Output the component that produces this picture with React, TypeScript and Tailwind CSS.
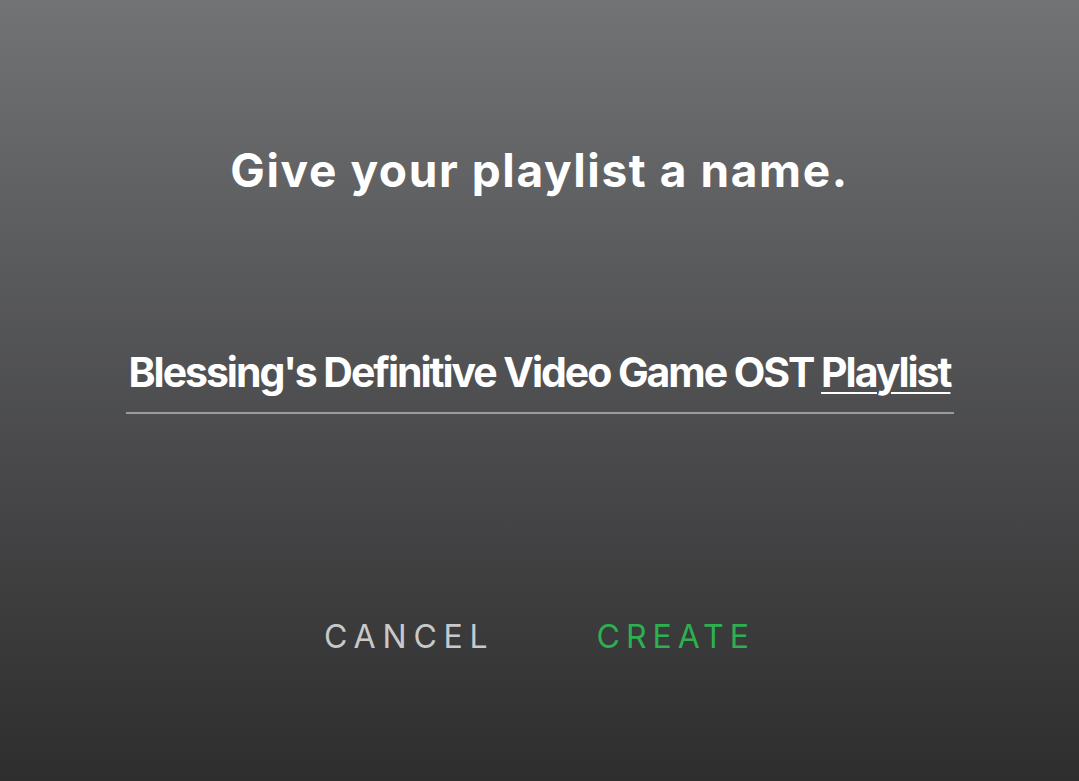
export default function App() {
  return (
    <div
      className="h-[781px] w-full bg-gradient-to-b from-[#727375] to-[#2e2e2f] flex flex-col items-center"
      style={{ fontFamily: "Inter, 'Noto Sans', sans-serif" }}
    >
      {/* Heading */}
      <h1 className="mt-[140px] text-[46px] leading-[60px] font-bold text-white tracking-[1.6px]">
        Give your playlist a name.
      </h1>

      {/* Name input */}
      <div className="mt-[150px] w-[828px] border-b-2 border-[#9b9b9c] pb-[18px] flex justify-center">
        <p className="text-[41px] leading-[44px] font-bold text-white tracking-[-2.05px] whitespace-nowrap">
          Blessing's Definitive Video Game OST <span className="underline decoration-2 underline-offset-[5px]">Playlist</span>
        </p>
      </div>

      {/* Actions */}
      <div className="mt-[206px] flex items-center gap-[102px]">
        <button className="text-[32px] leading-[34px] tracking-[6.8px] text-[#c9c9c9]">CANCEL</button>
        <button className="text-[32px] leading-[34px] tracking-[6px] text-[#2db050]">CREATE</button>
      </div>
    </div>
  )
}
